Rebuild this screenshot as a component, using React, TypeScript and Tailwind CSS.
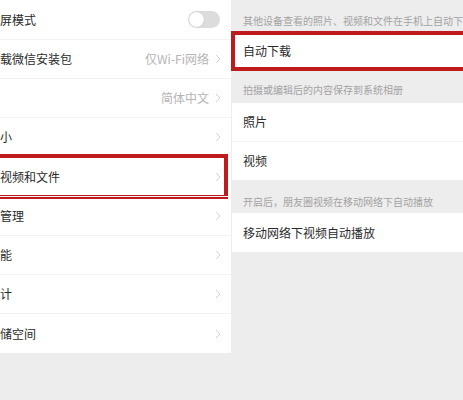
import React from 'react';

const Chevron = () => (
  <svg width="6" height="10" viewBox="0 0 6 10" className="shrink-0">
    <path d="M1 1l4 4-4 4" fill="none" stroke="#d6d6d6" strokeWidth="1" />
  </svg>
);

const leftRows = [
  { label: '屏模式', h: 'h-[39px]', toggle: true },
  { label: '载微信安装包', h: 'h-[39px]', value: '仅Wi-Fi网络' },
  { label: '', h: 'h-[39px]', value: '简体中文' },
  { label: '小', h: 'h-[39px]' },
  { label: '视频和文件', h: 'h-[40px]', marked: true },
  { label: '管理', h: 'h-[39px]' },
  { label: '能', h: 'h-[39px]' },
  { label: '计', h: 'h-[39px]' },
  { label: '储空间', h: 'h-[40px]' },
];

const App = () => {
  return (
    <div className="flex w-[463px] h-[400px] overflow-hidden bg-[#ededed] font-['Noto_Sans_CJK_SC','Liberation_Sans',sans-serif] text-[12px] text-[#2a2a2a]">
      {/* left settings list */}
      <div className="w-[231px] shrink-0 self-start bg-white">
        {leftRows.map((row, i) => (
          <div
            key={i}
            className={`relative flex items-center ${row.h} ${i > 0 ? 'border-t border-[#f2f2f2]' : ''}`}
          >
            <div className="flex-1 whitespace-nowrap">{row.label}</div>
            {row.toggle ? (
              <div className="mr-[11px] w-[32px] h-[17px] rounded-full bg-[#dcdcdc] p-[1px] flex items-center">
                <div className="w-[15px] h-[15px] rounded-full bg-white shadow-[0_0_1px_rgba(0,0,0,0.25)]" />
              </div>
            ) : (
              <div className="flex items-center gap-[6px] mr-[10px]">
                {row.value && <span className="text-[#b5b5b5]">{row.value}</span>}
                <Chevron />
              </div>
            )}
            {row.marked && (
              <div className="absolute -top-[3px] -bottom-[3px] -left-[10px] right-[3px] border-[4px] border-[#bf1a1c]" />
            )}
          </div>
        ))}
      </div>

      {/* right detail page */}
      <div className="flex-1 ml-[1px]">
        <div className="h-[32px] flex items-end pb-[4px] pl-[11px] whitespace-nowrap text-[10px] text-[#a3a3a3]">
          其他设备查看的照片、视频和文件在手机上自动下载
        </div>
        <div className="relative h-[38px] bg-white flex items-center pl-[11px]">
          自动下载
          <div className="absolute -top-[1px] -bottom-[1px] -left-[1px] -right-[10px] border-[4px] border-[#bf1a1c]" />
        </div>
        <div className="h-[33px] flex items-end pb-[6px] pl-[11px] whitespace-nowrap text-[10px] text-[#a3a3a3]">
          拍摄或编辑后的内容保存到系统相册
        </div>
        <div className="bg-white">
          <div className="h-[38px] flex items-center pl-[11px]">照片</div>
          <div className="h-[39px] flex items-center pl-[11px] border-t border-[#f2f2f2]">视频</div>
        </div>
        <div className="h-[33px] flex items-end pb-[4px] pl-[11px] whitespace-nowrap text-[10px] text-[#a3a3a3]">
          开启后，朋友圈视频在移动网络下自动播放
        </div>
        <div className="h-[39px] bg-white flex items-center pl-[11px]">移动网络下视频自动播放</div>
      </div>
    </div>
  );
};

export default App;
